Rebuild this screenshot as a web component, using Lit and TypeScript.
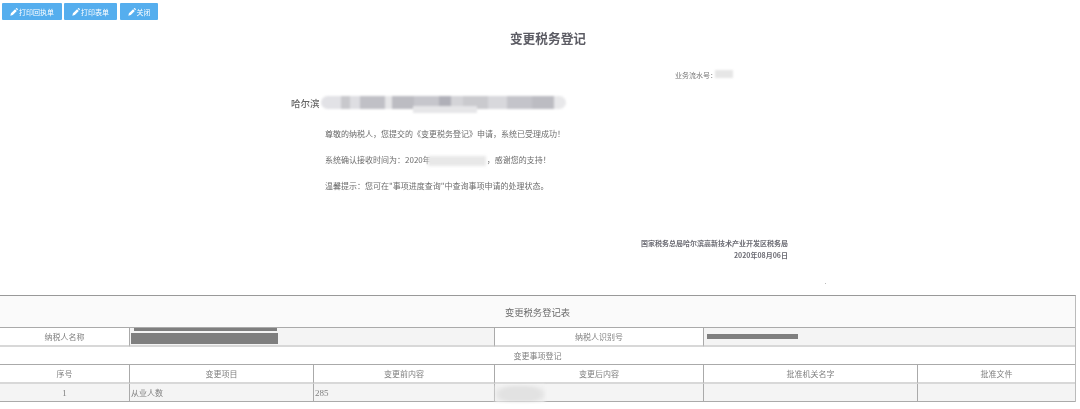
import { LitElement, html, css } from "lit";
import { customElement } from "lit/decorators.js";

const PENCIL = html`<svg class="ico" viewBox="0 0 12 12"><path d="M.5 11.5 L1.4 7.8 L7.6 1.8 L10.2 4.4 L4.2 10.6 Z M8.5 1 L9.3 .3 Q10 -.1 10.6 .4 L11.6 1.4 Q12 2 11.6 2.6 L11 3.5 Z" fill="#fff"/></svg>`;

@customElement("app-root")
export class AppRoot extends LitElement {
  static styles = css`
    :host { display: block; width: 1080px; height: 409px; overflow: hidden; background: #fff; position: relative;
      font-family: "Noto Sans CJK SC", "Liberation Sans", sans-serif; color: #666; text-spacing-trim: space-all; }
    .page { height: 409px; display: flex; flex-direction: column; filter: blur(0.45px); }
    .bar { display: flex; gap: 2px; padding: 3px 0 0 2px; height: 20px; box-sizing: border-box; }
    .btn { display: flex; align-items: center; justify-content: center; gap: 1px; height: 17px; background: #55aeee; color: #fff;
      font-size: 7px; border-radius: 1px; box-sizing: border-box; }
    .b1 { width: 60px; } .b2 { width: 53px; } .b3 { width: 38px; margin-left: 1px; }
    .ico { width: 8px; height: 8px; }
    h1 { margin: 9px 0 0; height: 18px; line-height: 18px; text-align: center; font-size: 12.7px; font-weight: 700; color: #5c5c64; padding-left: 16px; }
    .serial { margin: 22px 0 0 675px; height: 12px; line-height: 12px; font-size: 7px; color: #777; white-space: nowrap; }
    .addr { margin: 15px 0 0 291px; height: 14px; line-height: 14px; font-size: 9.5px; font-weight: 500; color: #666; }
    .body { margin: 18px 0 0 325px; display: flex; flex-direction: column; gap: 14px; font-size: 8px; line-height: 12px; white-space: nowrap; color: #6c6c6c; }
    .sign { margin: 45px 0 0; padding-right: 292px; text-align: right; font-size: 7px; line-height: 12px; font-weight: 700; color: #6c6c74; }
    .table { position: absolute; left: 0; top: 295px; width: 1076px; display: grid; border-top: 1px solid #999; border-right: 1px solid #bbb; box-sizing: border-box;
      grid-template-columns: 129px 184px 181px 209px 214px 1fr; grid-template-rows: 32px 19px 18px 19px 18px; font-size: 8px; color: #808080; }
    .c { display: flex; align-items: center; justify-content: center; box-sizing: border-box; border-bottom: 1px solid #aaa; border-left: 1px solid #aaa; white-space: nowrap; }
    .first { border-left: none; }
    .title { grid-column: 1 / -1; background: #fafafa; font-size: 9.3px; color: #6c6c6c; border-left: none; }
    .gray { background: #f4f4f4; }
    .s1 { grid-column: span 1; }
    .s2 { grid-column: span 2; }
    .light { border-bottom: 2px solid #d8d8d8; }
    .left { justify-content: flex-start; padding-left: 1px; }
    .num { font-family: "Liberation Serif", serif; font-size: 9px; }
    .wide { grid-column: 1 / -1; border-left: none; }
    .mask { position: absolute; }
    .m1 { left: 321px; top: 96px; width: 245px; height: 13px; border-radius: 7px; filter: blur(1.2px);
      background: linear-gradient(90deg, #e2e2e6 0 8%, #c8c8cc 8% 12%, #dedee2 12% 16%, #c0c0c6 16% 26%, #e6e6e8 26% 29%, #bcbcc2 29% 38%, #c6c6cc 38% 48%, #b0b0b8 48% 53%, #d4d4d8 53% 58%, #cacace 58% 68%, #d8d8dc 68% 76%, #c4c4ca 76% 86%, #bcbcc2 86% 95%, #e8e8ea 95%); }
    .m1b { left: 413px; top: 106px; width: 64px; height: 7px; background: #e6e6e8; filter: blur(1.2px); }
    .m2 { left: 715px; top: 70px; width: 18px; height: 8px; background: #e6e6e6; filter: blur(1px); }
    .m3 { left: 428px; top: 156px; width: 58px; height: 10px; background: #e8e8e8; filter: blur(1.5px); }
    .m4 { left: 131px; top: 333px; width: 147px; height: 11px; background: #7f7f7f; }
    .m4b { left: 134px; top: 328px; width: 143px; height: 3px; background: #7f7f7f; }
    .m5 { left: 707px; top: 334px; width: 91px; height: 5px; background: #7f7f7f; filter: blur(.5px); }
    .m6 { left: 495px; top: 385px; width: 50px; height: 17px; background: radial-gradient(ellipse at 50% 55%, #e2e2e2 0 55%, #f2f2f2 85%); filter: blur(1.5px); }
    .m7 { left: 825px; top: 283px; width: 1px; height: 1px; background: #bbb; }
  `;

  render() {
    return html`
      <div class="page">
        <div class="bar">
          <div class="btn b1">${PENCIL}打印回执单</div>
          <div class="btn b2">${PENCIL}打印表单</div>
          <div class="btn b3">${PENCIL}关闭</div>
        </div>
        <h1>变更税务登记</h1>
        <div class="serial">业务流水号：</div>
        <div class="addr">哈尔滨</div>
        <div class="body">
          <div>尊敬的纳税人，您提交的《变更税务登记》申请，系统已受理成功！</div>
          <div>系统确认接收时间为：2020年　　　　　　　，感谢您的支持！</div>
          <div>温馨提示：您可在"事项进度查询"中查询事项申请的处理状态。</div>
        </div>
        <div class="sign">国家税务总局哈尔滨高新技术产业开发区税务局<br />2020年08月06日</div>
        <div class="table">
          <div class="c title">变更税务登记表</div>
          <div class="c first light">纳税人名称</div>
          <div class="c gray s2 light"></div>
          <div class="c s1 light">纳税人识别号</div>
          <div class="c gray s2 light"></div>
          <div class="c wide">变更事项登记</div>
          <div class="c first light">序号</div>
          <div class="c light">变更项目</div>
          <div class="c light">变更前内容</div>
          <div class="c light">变更后内容</div>
          <div class="c light">批准机关名字</div>
          <div class="c light">批准文件</div>
          <div class="c gray first num">1</div>
          <div class="c gray left">从业人数</div>
          <div class="c gray left num">285</div>
          <div class="c gray"></div>
          <div class="c gray"></div>
          <div class="c gray"></div>
        </div>
        <div class="mask m1"></div>
        <div class="mask m1b"></div>
        <div class="mask m2"></div>
        <div class="mask m3"></div>
        <div class="mask m4"></div>
        <div class="mask m4b"></div>
        <div class="mask m5"></div>
        <div class="mask m6"></div>
        <div class="mask m7"></div>
      </div>
    `;
  }
}
